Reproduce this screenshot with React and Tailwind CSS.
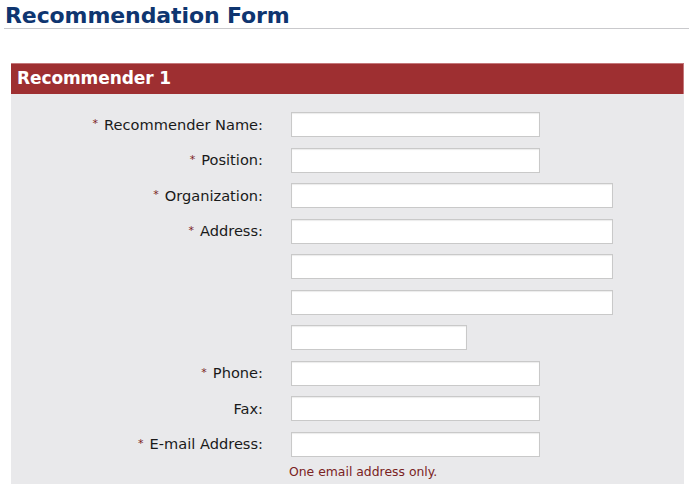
export default function App() {
  const rows = [
    { label: "Recommender Name", req: true, w: "w-[249px]" },
    { label: "Position", req: true, w: "w-[249px]" },
    { label: "Organization", req: true, w: "w-[322px]" },
    { label: "Address", req: true, w: "w-[322px]" },
    { label: "", w: "w-[322px]" },
    { label: "", w: "w-[322px]" },
    { label: "", w: "w-[176px]" },
    { label: "Phone", req: true, w: "w-[249px]" },
    { label: "Fax", req: false, w: "w-[249px]" },
    { label: "E-mail Address", req: true, w: "w-[249px]" },
  ];
  return (
    <div className="w-[689px] h-[484px] overflow-hidden bg-white font-['DejaVu_Sans',sans-serif]">
      <div className="pl-[5px] pt-[4px] h-[28px] text-[22px] leading-[24px] font-bold text-[#0e3570] tracking-[-0.1px]">
        Recommendation Form
      </div>
      <div className="ml-[4px] h-[1px] bg-[#c9c9cc]"></div>
      <div className="mt-[34px] mx-[11px] w-[673px]">
        <div className="h-[31px] bg-[#9e2f31] border-t border-r border-[#c4777a] flex items-center pl-[6px] text-white font-bold text-[17px] tracking-[-0.1px]">
          Recommender 1
        </div>
        <div className="bg-[#e9e9eb] h-[400px] pt-[18px]">
          <div className="grid grid-cols-[252px_1fr] gap-x-[28px] gap-y-[10.5px]">
            {rows.map((r, i) => (
              <div key={i} className="contents">
                <div className="flex items-center justify-end h-[25px] text-[14.6px] text-[#1a1a1a]">
                  {r.label && (
                    <>
                      {r.req && <span className="text-[#7a2020] text-[11px] mr-[6px]">*</span>}
                      <span>{r.label}:</span>
                    </>
                  )}
                </div>
                <div>
                  <div className={`${r.w} h-[25px] bg-white border border-[#c9c9c9] shadow-[inset_0_1px_1px_rgba(0,0,0,0.08)]`}></div>
                </div>
              </div>
            ))}
            <div></div>
            <div className="-mt-[4px] -ml-[2px] text-[12.4px] text-[#7a2222]">One email address only.</div>
          </div>
        </div>
      </div>
    </div>
  );
}
